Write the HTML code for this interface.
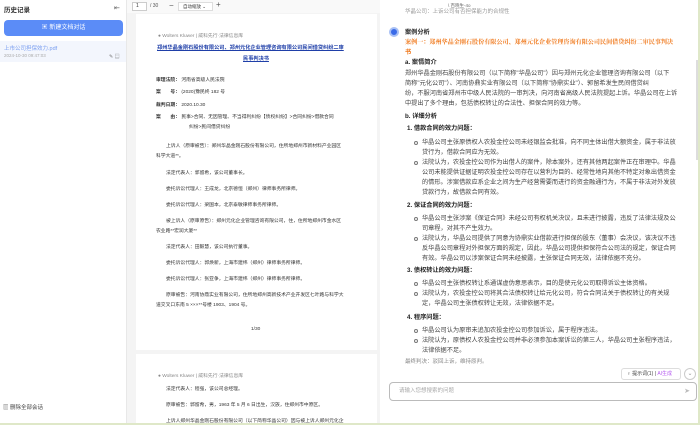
<!DOCTYPE html><html><head><meta charset="utf-8"><style>
*{margin:0;padding:0;box-sizing:border-box}
body{width:700px;height:425px;overflow:hidden;background:#fff;font-family:"Liberation Sans","Noto Sans CJK SC",sans-serif;position:relative;color:#333}
.abs{position:absolute}
#side{left:0;top:0;width:127px;height:425px;background:#fff;border-right:1px solid #e8e8e8}
#pdf{left:127px;top:0;width:253px;height:425px;background:#f4f4f4}
.page{position:absolute;left:9px;width:241px;background:#fff}
.pt{position:absolute;font-size:4.8px;color:#333;white-space:nowrap;line-height:6px}
#chat{left:380px;top:0;width:320px;height:425px;background:#fff;overflow:hidden}
.ct{position:absolute;left:25px;font-size:6.2px;line-height:10px;white-space:nowrap;color:#444}
.bul{position:absolute;left:42px;font-size:6.2px;line-height:10px;white-space:nowrap;color:#444}
.dot{position:absolute;left:34px;width:4px;height:4px;border:1px solid #777;border-radius:50%}
</style></head><body>
<div id="side" class="abs">
<div class="abs" style="left:4px;top:4px;font-size:6.5px;font-weight:bold;color:#333">历史记录</div>
<div class="abs" style="left:114px;top:4px;font-size:7px;color:#666">⇤</div>
<div class="abs" style="left:4px;top:20px;width:119px;height:16px;background:#5b8cf7;border-radius:4px;color:#fff;font-size:6px;text-align:center;line-height:16px">▣ 新建文档对话</div>
<div class="abs" style="left:0;top:41px;width:126px;height:21px;background:#f3f6fd"></div>
<div class="abs" style="left:4px;top:44px;font-size:5.5px;color:#7a9ef0">上市公司担保效力.pdf</div>
<div class="abs" style="left:4px;top:53px;font-size:4.5px;color:#aaa">2024-10-30 09:47:03</div>
<div class="abs" style="left:109px;top:53px;font-size:5px;color:#777">✎ ▤</div>
<div class="abs" style="left:3px;top:403px;font-size:5.5px;color:#444">▥ 删除全部会话</div>
</div>
<div id="pdf" class="abs">
<div class="abs" style="left:0;top:0;width:253px;height:13px;background:#f9f9f9"></div>
<div class="abs" style="left:5px;top:2px;width:15px;height:9px;border:1px solid #ccc;background:#fff;font-size:5px;padding-left:3px">1</div>
<div class="abs" style="left:23px;top:3px;font-size:5px;color:#555">/ 30</div>
<div class="abs" style="left:42px;top:1px;font-size:8px;color:#555">−</div>
<div class="abs" style="left:51px;top:2px;width:35px;height:9px;border:1px solid #ddd;background:#fff;font-size:4.5px;padding-left:4px;line-height:8px">自动缩放 ⌄</div>
<div class="abs" style="left:89px;top:0;font-size:8px;color:#555">+</div>
<div class="page" style="top:14px;height:336px">
<div class="pt" style="left:22px;top:20px;color:#888">● Wolters Kluwer | 威科先行·法律信息库</div>
<div class="pt" style="left:21px;top:31px;color:#1f3fa8;font-weight:bold;font-size:5.2px;text-decoration:underline">郑州华晶金刚石股份有限公司、郑州元化企业管理咨询有限公司民间借贷纠纷二审</div>
<div class="pt" style="left:107px;top:42px;color:#1f3fa8;font-weight:bold;font-size:5.2px;text-decoration:underline">民事判决书</div>
<div class="pt" style="left:20px;top:64px"><b>审理法院：</b>  河南省高级人民法院</div>
<div class="pt" style="left:20px;top:76px"><b>案　　号：</b>  (2020)豫民终 182 号</div>
<div class="pt" style="left:20px;top:89px"><b>裁判日期：</b>  2020.10.30</div>
<div class="pt" style="left:20px;top:101px"><b>案　　由：</b>  民事&gt;合同、无因管理、不当得利纠纷【债权纠纷】&gt;合同纠纷&gt;借款合同</div>
<div class="pt" style="left:53px;top:111px">纠纷&gt;民间借贷纠纷</div>
<div class="pt" style="left:30px;top:130px">上诉人（原审被告）：郑州华晶金刚石股份有限公司，住所地郑州市新材料产业园区</div>
<div class="pt" style="left:20px;top:140px">科学大道**。</div>
<div class="pt" style="left:30px;top:157px">法定代表人：郭留希，该公司董事长。</div>
<div class="pt" style="left:30px;top:173px">委托诉讼代理人：王成龙，北京德恒（郑州）律师事务所律师。</div>
<div class="pt" style="left:30px;top:189px">委托诉讼代理人：梁国本，北京泰敏律师事务所律师。</div>
<div class="pt" style="left:30px;top:205px">被上诉人（原审原告）：郑州元化企业管理咨询有限公司，住，住所地郑州市金水区</div>
<div class="pt" style="left:20px;top:215px">农业路**宏润大厦**</div>
<div class="pt" style="left:30px;top:231px">法定代表人：田毅慧，该公司执行董事。</div>
<div class="pt" style="left:30px;top:247px">委托诉讼代理人：郭焕新，上海市建纬（郑州）律师事务所律师。</div>
<div class="pt" style="left:30px;top:263px">委托诉讼代理人：张亚争，上海市建纬（郑州）律师事务所律师。</div>
<div class="pt" style="left:30px;top:279px">原审被告：河南协鼎实业有限公司，住所地郑州高新技术产业开发区七叶路与科学大</div>
<div class="pt" style="left:20px;top:289px">道交叉口东南 5 ×××**号楼 1903、1904 号。</div>
<div class="pt" style="left:115px;top:313px">1/30</div>
</div>
<div class="page" style="top:354px;height:80px">
<div class="pt" style="left:22px;top:20px;color:#888">● Wolters Kluwer | 威科先行·法律信息库</div>
<div class="pt" style="left:30px;top:33px">法定代表人：程强，该公司总经理。</div>
<div class="pt" style="left:30px;top:49px">原审被告：郭留希，男，1963 年 5 月 6 日出生，汉族，住郑州市中原区。</div>
<div class="pt" style="left:30px;top:65px">上诉人郑州华晶金刚石股份有限公司（以下简称华晶公司）因与被上诉人郑州元化企</div>
</div>
</div>
<div id="chat" class="abs">
<div class="abs" style="left:68px;top:3px;font-size:4.5px;color:#666">\ 百晓生-4o</div>
<div class="ct" style="top:7px;color:#999;font-size:5.5px">华晶公司：上诉公司有否担保能力的合规性</div>
<div class="abs" style="left:9px;top:27px;width:10px;height:10px;border-radius:50%;background:#3a6be8;border:2px solid #a8c0f5"></div>
<div class="ct" style="top:28px;font-weight:bold;color:#222">案例分析</div>
<div class="ct" style="top:38px;color:#f07a1e;font-weight:bold;font-family:'Liberation Serif','Noto Serif CJK SC',serif;font-size:6.1px">案例一：郑州华晶金刚石股份有限公司、郑州元化企业管理咨询有限公司民间借贷纠纷二审民事判决</div>
<div class="ct" style="top:48px;color:#f07a1e;font-weight:bold">书</div>
<div class="ct" style="top:58px;font-weight:bold;color:#222">a. 案情简介</div>
<div class="ct" style="top:69px">郑州华晶金刚石股份有限公司（以下简称"华晶公司"）因与郑州元化企业管理咨询有限公司（以下</div>
<div class="ct" style="top:79px">简称"元化公司"）、河南协鼎实业有限公司（以下简称"协鼎实业"）、郭留希发生民间借贷纠</div>
<div class="ct" style="top:89px">纷，不服河南省郑州市中级人民法院的一审判决，向河南省高级人民法院提起上诉。华晶公司在上诉</div>
<div class="ct" style="top:99px">中提出了多个理由，包括债权转让的合法性、担保合同的效力等。</div>
<div class="ct" style="top:112px;font-weight:bold;color:#222">b. 详细分析</div>
<div class="ct" style="top:124px;font-weight:bold;color:#222;left:27px">1. 借款合同的效力问题：</div>
<div class="dot" style="top:141px"></div><div class="bul" style="top:138px">华晶公司主张原债权人农投金控公司未经银监会批准，向不同主体出借大额资金，属于非法放</div>
<div class="bul" style="top:148px">贷行为，借款合同应为无效。</div>
<div class="dot" style="top:161px"></div><div class="bul" style="top:158px">法院认为，农投金控公司作为出借人的案件，除本案外，还有其他两起案件正在审理中。华晶</div>
<div class="bul" style="top:168px">公司未能提供证据证明农投金控公司存在以营利为目的、经常性地向其他不特定对象出借资金</div>
<div class="bul" style="top:178px">的情形。涉案借款应系企业之间为生产经营需要而进行的资金融通行为，不属于非法对外发放</div>
<div class="bul" style="top:188px">贷款行为，故借款合同有效。</div>
<div class="ct" style="top:201px;font-weight:bold;color:#222;left:27px">2. 保证合同的效力问题：</div>
<div class="dot" style="top:217px"></div><div class="bul" style="top:214px">华晶公司主张涉案《保证合同》未经公司有权机关决议，且未进行披露，违反了法律法规及公</div>
<div class="bul" style="top:224px">司章程，对其不产生效力。</div>
<div class="dot" style="top:237px"></div><div class="bul" style="top:234px">法院认为，华晶公司提供了同意为协鼎实业借款进行担保的股东（董事）会决议，该决议不违</div>
<div class="bul" style="top:244px">反华晶公司章程对外担保方面的规定，因此，华晶公司提供担保符合公司法的规定，保证合同</div>
<div class="bul" style="top:254px">有效。华晶公司以涉案保证合同未经披露，主张保证合同无效，法律依据不充分。</div>
<div class="ct" style="top:266px;font-weight:bold;color:#222;left:27px">3. 债权转让的效力问题：</div>
<div class="dot" style="top:282px"></div><div class="bul" style="top:279px">华晶公司主张债权转让系通谋虚伪意思表示，目的是使元化公司取得诉讼主体资格。</div>
<div class="dot" style="top:292px"></div><div class="bul" style="top:289px">法院认为，农投金控公司将其合法债权转让给元化公司，符合合同法关于债权转让的有关规</div>
<div class="bul" style="top:299px">定，华晶公司主张债权转让无效，法律依据不足。</div>
<div class="ct" style="top:313px;font-weight:bold;color:#222;left:27px">4. 程序问题：</div>
<div class="dot" style="top:329px"></div><div class="bul" style="top:326px">华晶公司认为原审未追加农投金控公司参加诉讼，属于程序违法。</div>
<div class="dot" style="top:339px"></div><div class="bul" style="top:336px">法院认为，原债权人农投金控公司并非必须参加本案诉讼的第三人，华晶公司主张程序违法，</div>
<div class="bul" style="top:346px">法律依据不足。</div>
<div class="ct" style="top:357px;font-size:5.5px;color:#888">最终判决：驳回上诉，维持原判。</div>
<div class="abs" style="left:241px;top:368px;width:60px;height:12px;border:1px solid #ddd;border-radius:3px;font-size:5px;line-height:10px;padding-left:5px;color:#444;white-space:nowrap">♀ 提示词(1) | <span style="color:#b65cf0">AI生成</span></div>
<div class="abs" style="left:304px;top:368px;width:12px;height:12px;border:1px solid #ccc;border-radius:50%;font-size:6px;text-align:center;line-height:10px;color:#999">⌄</div>
<div class="abs" style="left:9px;top:382px;width:308px;height:19px;border:1px solid #bbb;border-radius:4px;font-size:5.5px;color:#aaa;line-height:17px;padding-left:9px">请输入您想搜索的问题<span style="position:absolute;right:6px;color:#bbb;font-size:7px">➤</span></div>
<div class="abs" style="left:316px;top:60px;width:2px;height:100px;background:#ddd"></div>
</div>
<div class="abs" style="left:0;top:423px;width:700px;height:2px;background:#dfe8c8"></div>
<div class="abs" style="left:698px;top:0;width:2px;height:425px;background:#dfe8c8"></div>
</body></html>
